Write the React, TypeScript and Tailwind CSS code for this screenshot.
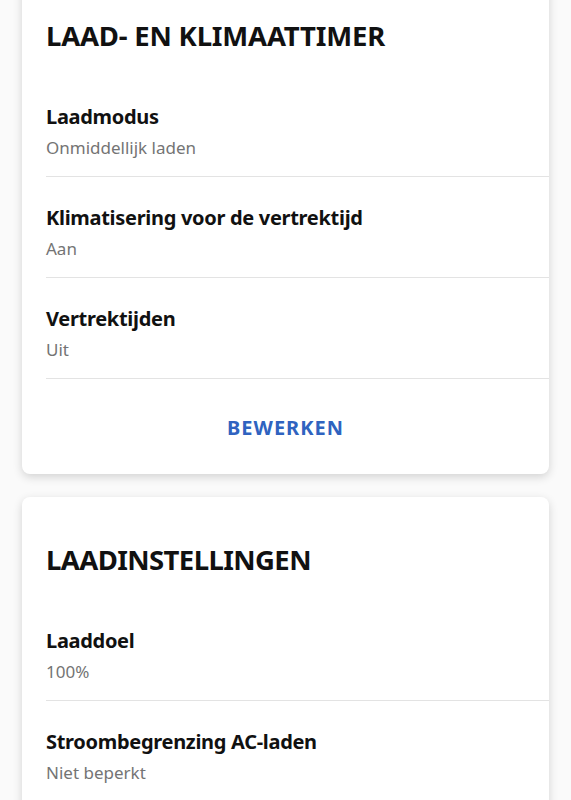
const SECTIONS = [
  {
    title: "LAAD- EN KLIMAATTIMER",
    rows: [
      { label: "Laadmodus", value: "Onmiddellijk laden" },
      { label: "Klimatisering voor de vertrektijd", value: "Aan" },
      { label: "Vertrektijden", value: "Uit" },
    ],
    action: "BEWERKEN",
  },
  {
    title: "LAADINSTELLINGEN",
    rows: [
      { label: "Laaddoel", value: "100%" },
      { label: "Stroombegrenzing AC-laden", value: "Niet beperkt" },
    ],
  },
];

function SettingRow({ label, value }: { label: string; value: string }) {
  return (
    <div className="ml-6 border-b border-[#e3e3e3] pt-[27px] pb-4">
      <div className="text-[20px] leading-[28px] font-bold text-[#111] tracking-[-0.3px]">{label}</div>
      <div className="mt-[5px] text-[17px] leading-[24px] text-[#747474]">{value}</div>
    </div>
  );
}

export default function App() {
  const [timer, charging] = SECTIONS;
  return (
    <div
      className="min-h-screen bg-[#fafafa] px-[22px] overflow-hidden"
      style={{ fontFamily: '"Noto Sans", "Liberation Sans", sans-serif' }}
    >
      <div className="-mt-4 rounded-lg bg-white shadow-[0_3px_10px_rgba(0,0,0,0.16)] pt-[34px]">
        <h2 className="px-6 mb-[22px] text-[27.5px] leading-[36px] font-bold text-[#111] tracking-[-0.2px]">
          {timer.title}
        </h2>
        {timer.rows.map((r) => (
          <SettingRow key={r.label} {...r} />
        ))}
        <div className="flex h-[95px] items-center justify-center pt-[3px]">
          <button className="text-[20px] font-bold text-[#2f63c0] tracking-[1px]">{timer.action}</button>
        </div>
      </div>

      <div className="mt-[23px] rounded-lg bg-white shadow-[0_3px_10px_rgba(0,0,0,0.16)] pt-[45px] pb-4">
        <h2 className="px-6 mb-[22px] text-[27.5px] leading-[36px] font-bold text-[#111] tracking-[-0.6px]">
          {charging.title}
        </h2>
        {charging.rows.map((r) => (
          <SettingRow key={r.label} {...r} />
        ))}
      </div>
    </div>
  );
}
